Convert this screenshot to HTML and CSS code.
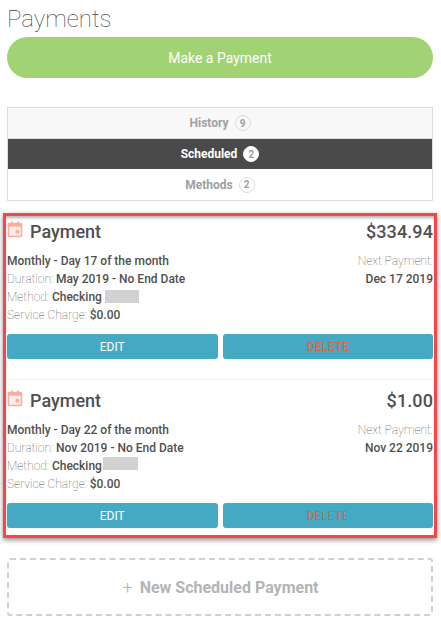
FILE: index.html
```html
<!DOCTYPE html>
<html lang="en">

<head>
    <meta charset="utf-8">
    <meta name="viewport" content="width=device-width, initial-scale=1.0">
    <title>Payments</title>
    <link rel="stylesheet" href="styles.css">
</head>

<body>

    <h1>Payments</h1>

    <button class="make-payment">Make a Payment</button>

    <nav class="tabs">
        <a class="tab tab-history" href="#">History <span class="count">9</span></a>
        <a class="tab tab-active" href="#">Scheduled <span class="count">2</span></a>
        <a class="tab" href="#">Methods <span class="count">2</span></a>
    </nav>

    <section class="highlight">

        <article class="payment">
            <div class="payment-head">
                <h2>
                    <svg class="cal" viewBox="0 0 16 17" width="16" height="17">
                        <path d="M1.5 3.5a1 1 0 0 1 1-1h11a1 1 0 0 1 1 1v11a1 1 0 0 1-1 1h-11a1 1 0 0 1-1-1z" fill="#fdeee9" stroke="#f9ad9a" stroke-width="1.6"/>
                        <rect x="1" y="2" width="14" height="3.6" fill="#f9ad9a"/>
                        <rect x="4" y="0.5" width="1.8" height="3" fill="#f9ad9a"/>
                        <rect x="10.2" y="0.5" width="1.8" height="3" fill="#f9ad9a"/>
                        <rect x="8.6" y="9" width="3.6" height="3.4" fill="#f9ad9a"/>
                    </svg>
                    Payment
                </h2>
                <div class="amount">$334.94</div>
            </div>
            <div class="details">
                <div>
                    <p><b>Monthly - Day 17 of the month</b></p>
                    <p>Duration: <b>May 2019 - No End Date</b></p>
                    <p>Method: <b>Checking</b><span class="redacted"></span></p>
                    <p>Service Charge: <b>$0.00</b></p>
                </div>
                <div class="next">
                    <p>Next Payment:</p>
                    <p><b>Dec 17 2019</b></p>
                </div>
            </div>
            <div class="actions">
                <button class="action">EDIT</button>
                <button class="action action-delete">DELETE</button>
            </div>
        </article>

        <article class="payment payment-last">
            <div class="payment-head">
                <h2>
                    <svg class="cal" viewBox="0 0 16 17" width="16" height="17">
                        <path d="M1.5 3.5a1 1 0 0 1 1-1h11a1 1 0 0 1 1 1v11a1 1 0 0 1-1 1h-11a1 1 0 0 1-1-1z" fill="#fdeee9" stroke="#f9ad9a" stroke-width="1.6"/>
                        <rect x="1" y="2" width="14" height="3.6" fill="#f9ad9a"/>
                        <rect x="4" y="0.5" width="1.8" height="3" fill="#f9ad9a"/>
                        <rect x="10.2" y="0.5" width="1.8" height="3" fill="#f9ad9a"/>
                        <rect x="8.6" y="9" width="3.6" height="3.4" fill="#f9ad9a"/>
                    </svg>
                    Payment
                </h2>
                <div class="amount">$1.00</div>
            </div>
            <div class="details">
                <div>
                    <p><b>Monthly - Day 22 of the month</b></p>
                    <p>Duration: <b>Nov 2019 - No End Date</b></p>
                    <p>Method: <b>Checking</b><span class="redacted redacted-second"></span></p>
                    <p>Service Charge: <b>$0.00</b></p>
                </div>
                <div class="next">
                    <p>Next Payment:</p>
                    <p><b>Nov 22 2019</b></p>
                </div>
            </div>
            <div class="actions">
                <button class="action">EDIT</button>
                <button class="action action-delete">DELETE</button>
            </div>
        </article>

    </section>

    <a class="new-payment" href="#"><span class="plus">+</span> New Scheduled Payment</a>

</body>

</html>
```

FILE: styles.css
```css
body {
    margin: 0;
    padding: 0 8px 0 7px;
    background-color: #fff;
    font-family: 'Roboto', sans-serif;
    color: #4a4a4a;
}

h1 {
    margin: 0;
    padding-top: 3px;
    padding-bottom: 2px;
    font-size: 24px;
    line-height: 32px;
    font-weight: 100;
    color: #444;
}

button {
    font-family: 'Roboto', sans-serif;
    border: none;
}

.make-payment {
    display: block;
    width: 100%;
    height: 41px;
    margin-bottom: 29px;
    border-radius: 21px;
    background-color: #a1d273;
    color: #fff;
    font-size: 14px;
    font-weight: 400;
}

/* tabs */

.tabs {
    display: flex;
    flex-direction: column;
    border: 1px solid #dcdcdc;
}

.tab {
    display: flex;
    justify-content: center;
    align-items: center;
    gap: 6px;
    height: 31px;
    font-size: 12px;
    font-weight: 700;
    color: #a0a0a0;
    text-decoration: none;
}

.tab-history {
    background-color: #f8f8f8;
    border-bottom: 1px solid #dcdcdc;
    height: 30px;
}

.tab-active {
    background-color: #4a4a4a;
    color: #fff;
    height: 30px;
}

.count {
    display: flex;
    justify-content: center;
    align-items: center;
    width: 14px;
    height: 14px;
    border: 1px solid #dcdcdc;
    border-radius: 50%;
    font-size: 10px;
    color: #a0a0a0;
}

.tab-active .count {
    background-color: #fff;
    border-color: #fff;
}

/* red frame round the list */

.highlight {
    margin: 12px -4px 0 -4px;
    padding: 0 1px;
    border: 3px solid #f9444a;
    box-shadow: 0 2px 5px rgba(0, 0, 0, 0.45), inset 0 3px 3px -1px rgba(0, 0, 0, 0.3);
}

.payment {
    padding-top: 2px;
    padding-bottom: 20px;
    border-bottom: 1px solid #f0f0f0;
}

.payment-last {
    border-bottom: none;
    padding-top: 7px;
    padding-bottom: 7px;
}

.payment-head {
    display: flex;
    justify-content: space-between;
    align-items: center;
    height: 26px;
    margin-bottom: 8px;
}

h2 {
    display: flex;
    align-items: center;
    gap: 7px;
    margin: 0;
    font-size: 18px;
    font-weight: 500;
    color: #505050;
}

.cal {
    margin-top: -3px;
}

.amount {
    font-size: 18px;
    font-weight: 500;
    letter-spacing: 0.1px;
    color: #505050;
}

.details {
    display: flex;
    justify-content: space-between;
    height: 72px;
    margin-bottom: 10px;
}

p {
    margin: 0;
    font-size: 12px;
    line-height: 18px;
    font-weight: 100;
    color: #555;
    white-space: nowrap;
}

p b {
    font-weight: 500;
    color: #505050;
}

.next {
    text-align: right;
}

.redacted {
    display: inline-block;
    width: 34px;
    height: 13px;
    margin-left: 3px;
    vertical-align: -2px;
    background-color: #d2d2d2;
}

.redacted-second {
    width: 35px;
    margin-left: 1px;
    vertical-align: 0;
}

.actions {
    display: flex;
    gap: 5px;
}

.action {
    flex: 1;
    height: 25px;
    border-radius: 3px;
    background-color: #46a9c3;
    color: #fff;
    font-size: 12px;
    font-weight: 400;
}

.action-delete {
    color: #e2603c;
}

/* new payment */

.new-payment {
    display: flex;
    justify-content: center;
    align-items: center;
    gap: 7px;
    height: 54px;
    margin-top: 20px;
    border: 2px dashed #d0d0d0;
    border-radius: 3px;
    font-size: 16px;
    font-weight: 700;
    color: #b4b4b4;
    text-decoration: none;
}

.plus {
    font-weight: 300;
    font-size: 18px;
    margin-left: 1px;
}
```
